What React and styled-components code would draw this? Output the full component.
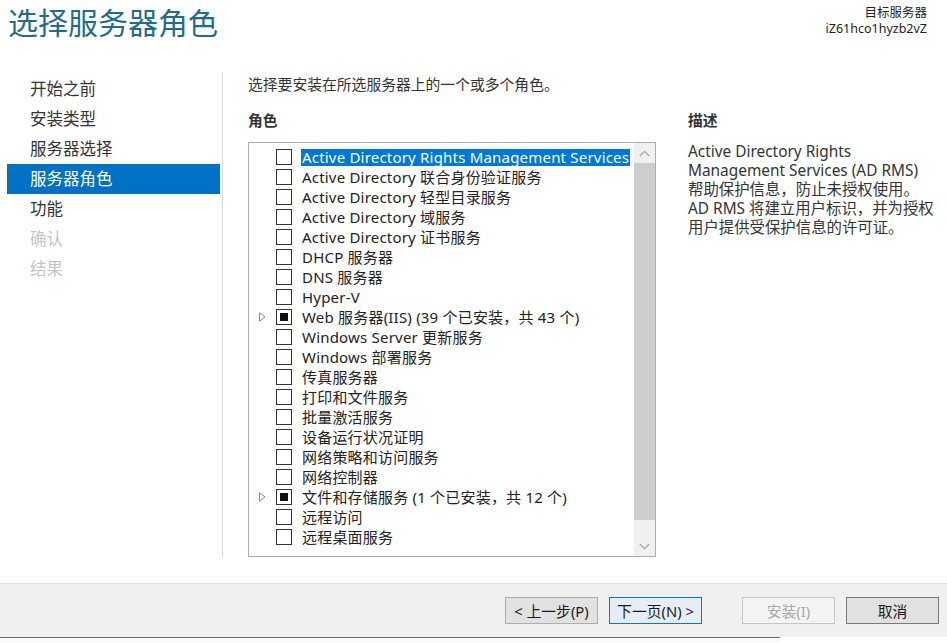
import React from 'react'
import styled, { createGlobalStyle } from 'styled-components'

const FONT = `"Noto Sans", "Noto Sans CJK SC", sans-serif`

const GlobalStyle = createGlobalStyle`
  html, body {
    margin: 0;
    padding: 0;
    background: #ffffff;
  }
  body {
    font-family: ${FONT};
    color: #333333;
  }
  * { box-sizing: border-box; }
`

const Page = styled.div`
  width: 947px;
  height: 643px;
  display: flex;
  flex-direction: column;
  overflow: hidden;
  background: #ffffff;
`

// Header
const Header = styled.div`
  height: 72px;
  display: flex;
  justify-content: space-between;
  align-items: flex-start;
  padding: 0 20px 0 8px;
`
const Title = styled.h1`
  margin: 1px 0 0;
  font-size: 30px;
  font-weight: 400;
  line-height: 44px;
  color: #1f6c8c;
`
const Target = styled.div`
  margin-top: 5px;
  text-align: right;
  font-size: 12.5px;
  line-height: 16px;
  color: #222;
`
const TargetLine = styled.div`
  height: 16px;
`

// Body
const Body = styled.div`
  flex: 1;
  display: flex;
`
const Nav = styled.ul`
  list-style: none;
  margin: 0;
  padding: 2px 0 0 7px;
  width: 222px;
  flex-shrink: 0;
`
const NavItem = styled.li`
  height: 30px;
  line-height: 30px;
  padding-left: 23px;
  font-size: 16.5px;
  color: ${p => (p.$active ? '#ffffff' : p.$disabled ? '#c4c4c4' : '#333333')};
  background: ${p => (p.$active ? '#0072c6' : 'transparent')};
  width: 213px;
`
const Divider = styled.div`
  width: 1px;
  height: 485px;
  background: #d9d9d9;
  flex-shrink: 0;
`
const Content = styled.div`
  flex: 1;
  padding-left: 25px;
`
const Intro = styled.div`
  margin-top: 2px;
  font-size: 14.8px;
  line-height: 20px;
  color: #333;
`
const Columns = styled.div`
  display: flex;
  gap: 32px;
  margin-top: 16px;
`
const Column = styled.div`
  width: ${p => p.$width || 'auto'};
  flex-shrink: 0;
`
const SectionLabel = styled.div`
  font-size: 14.8px;
  line-height: 20px;
  font-weight: 700;
  color: #333;
  margin-bottom: 12px;
`

// Role list
const ListBox = styled.div`
  height: 415px;
  border: 1px solid #abadb3;
  display: flex;
`
const Rows = styled.div`
  flex: 1;
  padding-top: 4px;
`
const Row = styled.div`
  height: 20px;
  display: flex;
  align-items: center;
  font-size: 15px;
  letter-spacing: 0.2px;
  color: #222;
  white-space: nowrap;
`
const Expander = styled.span`
  width: 27px;
  height: 20px;
  display: flex;
  align-items: center;
  padding-left: 10px;
  flex-shrink: 0;
`
const Check = styled.span`
  width: 16px;
  height: 16px;
  border: 1px solid #333;
  background: #fff;
  display: flex;
  align-items: center;
  justify-content: center;
  flex-shrink: 0;
  &::after {
    content: '';
    display: ${p => (p.$partial ? 'block' : 'none')};
    width: 8px;
    height: 8px;
    background: #111;
  }
`
const Label = styled.span`
  margin-left: 9px;
  padding: 0 1px;
  line-height: 17px;
  background: ${p => (p.$selected ? '#0078d7' : 'transparent')};
  color: ${p => (p.$selected ? '#ffffff' : '#222')};
`

// Scrollbar
const ScrollBar = styled.div`
  width: 21px;
  background: #f0f0f0;
  display: flex;
  flex-direction: column;
  flex-shrink: 0;
`
const ScrollArrow = styled.div`
  height: 20px;
  display: flex;
  align-items: center;
  justify-content: center;
`
const Thumb = styled.div`
  height: 357px;
  background: #cdcdcd;
`
const Track = styled.div`
  flex: 1;
`

// Description
const Description = styled.p`
  margin: 0;
  font-size: 15.4px;
  line-height: 19px;
  color: #333;
`

// Footer
const Footer = styled.div`
  height: 54px;
  background: #f0f0f0;
  border-top: 1px solid #e3e3e3;
  display: flex;
  justify-content: flex-end;
  align-items: flex-start;
  padding: 13px 8px 0 0;
  gap: 11px;
`
const Button = styled.button`
  width: ${p => p.$width || 93}px;
  height: 27px;
  margin-left: ${p => p.$push || 0}px;
  font-family: ${FONT};
  font-size: 14.8px;
  padding: 0;
  background: ${p => (p.$disabled ? '#f4f4f4' : p.$default ? '#e5eef7' : '#e1e1e1')};
  border: 1px solid ${p => (p.$disabled ? '#c6c6c6' : p.$default ? '#0078d7' : p.$dark ? '#7a7a7a' : '#adadad')};
  color: ${p => (p.$disabled ? '#a8a8a8' : '#1a1a1a')};
`
const BottomEdge = styled.div`
  height: 6px;
  background: #fafafa;
  border-top: 1px solid #666;
  width: 780px;
`

const Triangle = () => (
  <svg width="7" height="10" viewBox="0 0 7 10">
    <path d="M0.5 0.8 L6 5 L0.5 9.2 Z" fill="none" stroke="#8a8a8a" strokeWidth="1" />
  </svg>
)

const Chevron = ({ up }) => (
  <svg width="11" height="7" viewBox="0 0 11 7">
    <path
      d={up ? 'M0.8 6 L5.5 1.3 L10.2 6' : 'M0.8 1 L5.5 5.7 L10.2 1'}
      fill="none"
      stroke="#a6a6a6"
      strokeWidth="1.2"
    />
  </svg>
)

const steps = [
  { name: '开始之前' },
  { name: '安装类型' },
  { name: '服务器选择' },
  { name: '服务器角色', active: true },
  { name: '功能' },
  { name: '确认', disabled: true },
  { name: '结果', disabled: true },
]

const roles = [
  { name: 'Active Directory Rights Management Services', selected: true },
  { name: 'Active Directory 联合身份验证服务' },
  { name: 'Active Directory 轻型目录服务' },
  { name: 'Active Directory 域服务' },
  { name: 'Active Directory 证书服务' },
  { name: 'DHCP 服务器' },
  { name: 'DNS 服务器' },
  { name: 'Hyper-V' },
  { name: 'Web 服务器(IIS) (39 个已安装，共 43 个)', expandable: true, partial: true },
  { name: 'Windows Server 更新服务' },
  { name: 'Windows 部署服务' },
  { name: '传真服务器' },
  { name: '打印和文件服务' },
  { name: '批量激活服务' },
  { name: '设备运行状况证明' },
  { name: '网络策略和访问服务' },
  { name: '网络控制器' },
  { name: '文件和存储服务 (1 个已安装，共 12 个)', expandable: true, partial: true },
  { name: '远程访问' },
  { name: '远程桌面服务' },
]

export default function App() {
  return (
    <Page>
      <GlobalStyle />
      <Header>
        <Title>选择服务器角色</Title>
        <Target>
          <TargetLine>目标服务器</TargetLine>
          <TargetLine>iZ61hco1hyzb2vZ</TargetLine>
        </Target>
      </Header>

      <Body>
        <Nav>
          {steps.map(s => (
            <NavItem key={s.name} $active={s.active} $disabled={s.disabled}>
              {s.name}
            </NavItem>
          ))}
        </Nav>
        <Divider />
        <Content>
          <Intro>选择要安装在所选服务器上的一个或多个角色。</Intro>
          <Columns>
            <Column $width="408px">
              <SectionLabel>角色</SectionLabel>
              <ListBox>
                <Rows>
                  {roles.map(r => (
                    <Row key={r.name}>
                      <Expander>{r.expandable && <Triangle />}</Expander>
                      <Check $partial={r.partial} />
                      <Label $selected={r.selected}>{r.name}</Label>
                    </Row>
                  ))}
                </Rows>
                <ScrollBar>
                  <ScrollArrow><Chevron up /></ScrollArrow>
                  <Thumb />
                  <Track />
                  <ScrollArrow><Chevron /></ScrollArrow>
                </ScrollBar>
              </ListBox>
            </Column>
            <Column $width="255px">
              <SectionLabel>描述</SectionLabel>
              <Description>
                Active Directory Rights<br />
                Management Services (AD RMS)<br />
                帮助保护信息，防止未授权使用。<br />
                AD RMS 将建立用户标识，并为授权<br />
                用户提供受保护信息的许可证。
              </Description>
            </Column>
          </Columns>
        </Content>
      </Body>

      <Footer>
        <Button>&lt; 上一步(P)</Button>
        <Button $default>下一页(N) &gt;</Button>
        <Button $disabled $push={29}>安装(I)</Button>
        <Button $dark>取消</Button>
      </Footer>
      <BottomEdge />
    </Page>
  )
}
